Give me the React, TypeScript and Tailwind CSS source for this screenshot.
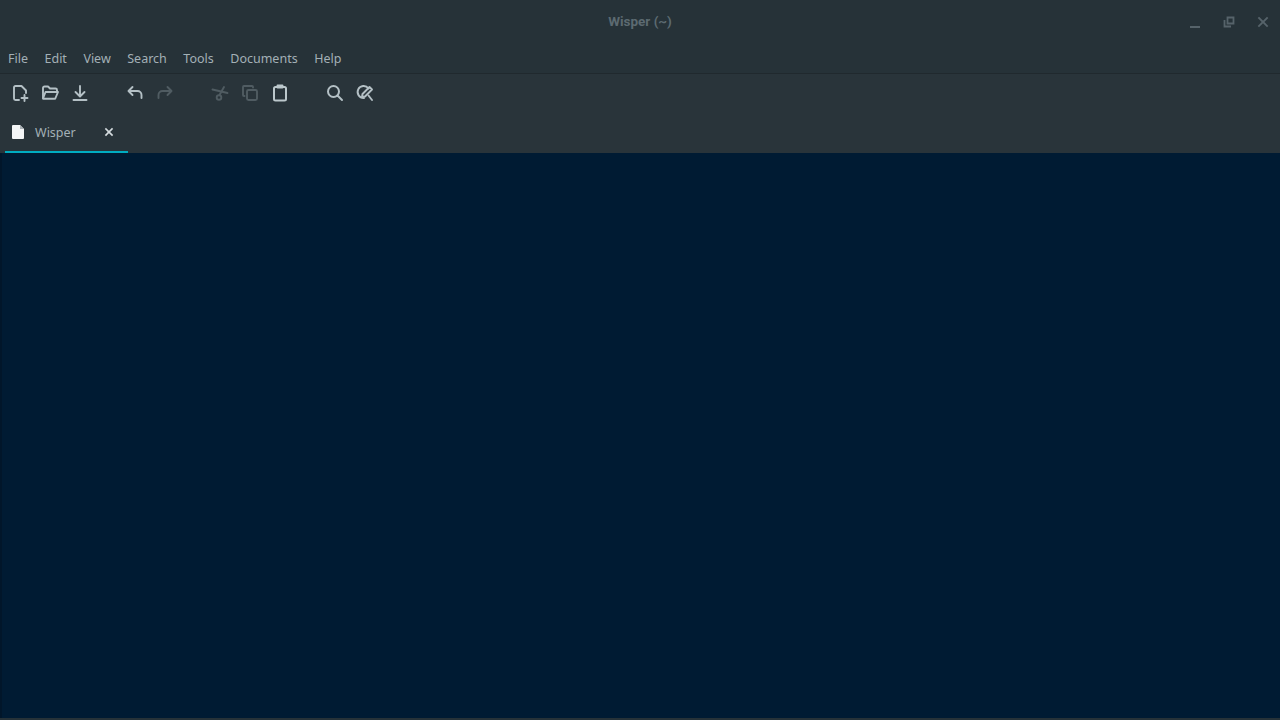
import { X } from "lucide-react";

const menus = ["File", "Edit", "View", "Search", "Tools", "Documents", "Help"];

function Icon({ children, off, x }: { children: React.ReactNode; off?: boolean; x?: string }) {
  return (
    <svg
      viewBox="0 0 20 20"
      fill="none"
      stroke="currentColor"
      strokeWidth="1.9"
      strokeLinecap="round"
      strokeLinejoin="round"
      className={`w-5 h-5 ${off ? "text-[#505c62]" : "text-[#b4c0c5]"} ${x ?? ""}`}
    >
      {children}
    </svg>
  );
}

export default function App() {
  return (
    <div className="w-[1280px] h-[720px] overflow-hidden flex flex-col bg-[#263238] font-['Noto_Sans',sans-serif]">
      {/* Title bar */}
      <div className="relative h-[42px] shrink-0 flex items-center justify-center">
        <span className="text-[13.5px] font-bold text-[#5c6a71] font-['Roboto',sans-serif] mt-[1px]">Wisper (~)</span>
        <div className="absolute right-0 top-0 h-[42px] flex items-center text-[#56636a]">
          <svg viewBox="0 0 12 12" className="w-3 h-3 mr-[22px] mt-[6px]"><rect x="1" y="8" width="10" height="2" fill="currentColor" /></svg>
          <svg viewBox="0 0 12 12" className="w-3 h-3 mr-[20px] mt-[2px]" fill="none" stroke="currentColor" strokeWidth="1.8"><path d="M4.500 1.500h6v6h-6z" /><path d="M1.500 4v6.500h6.500" /></svg>
          <X className="w-[16px] h-[16px] mr-[9px] mt-[1px]" strokeWidth={2.8} strokeLinecap="square" />
        </div>
      </div>

      {/* Menu bar */}
      <div className="h-[32px] shrink-0 flex items-center pl-2 pt-[3px] gap-[16.5px] border-b border-[#20292e] text-[12.5px] text-[#a3b0b6]">
        {menus.map((m) => (
          <span key={m}>{m}</span>
        ))}
      </div>

      {/* Toolbar */}
      <div className="h-[39px] shrink-0 flex items-center bg-[#29343a] pl-[10px] pb-[2px]">
        <Icon x="mr-[10px]">
          <path d="M9 17H5.500A1.500 1.500 0 0 1 4 15.500V4.500A1.500 1.500 0 0 1 5.500 3H11.500L16 7.500V10" />
          <path d="M14.500 12v6M11.500 15h6" />
        </Icon>
        <Icon x="mr-[10px]">
          <path d="M3 15V5a1.500 1.500 0 0 1 1.500-1.500H8L10 5.500H15.500A1.500 1.500 0 0 1 17 7v1" />
          <path d="M3 15.500 5.500 9H18l-2.500 6a1 1 0 0 1-1 .8H4a1 1 0 0 1-1-.3Z" />
        </Icon>
        <Icon x="mr-[35px]">
          <path d="M10 3v10M5.500 9l4.500 4.500L14.500 9M3.500 17h13" />
        </Icon>
        <Icon x="mr-[10px]">
          <path d="M7.500 4 3.500 8l4 4" />
          <path d="M4 8h8.500a4 4 0 0 1 4 4v3" />
        </Icon>
        <Icon off x="mr-[35px]">
          <path d="M12.500 4l4 4-4 4" />
          <path d="M16 8H7.500a4 4 0 0 0-4 4v3" />
        </Icon>
        <Icon off x="mr-[10px]">
          <circle cx="9" cy="14.500" r="2.300" />
          <path d="M2.500 6.500 17.500 10M9.500 12l4.500-8" />
        </Icon>
        <Icon off x="mr-[10px]">
          <rect x="7" y="7" width="10" height="10" rx="1.500" />
          <path d="M13 4.500V4a1 1 0 0 0-1-1H4a1 1 0 0 0-1 1v8a1 1 0 0 0 1 1h.500" />
        </Icon>
        <Icon x="mr-[35px] text-[#bcc8cc]">
          <rect x="4" y="4" width="12" height="13.500" rx="1.500" strokeWidth="2" />
          <rect x="7.500" y="2.500" width="5" height="2" fill="currentColor" />
        </Icon>
        <Icon x="mr-[10px]">
          <circle cx="8.500" cy="8.500" r="5.500" strokeWidth="2" />
          <path d="m12.500 12.500 4.500 4.500" strokeWidth="2" />
        </Icon>
        <Icon>
          <path d="M9 15A6 6 0 1 1 13.500 5.500" />
          <path d="m7 14 .5-3L14.500 4 17 6.500l-7 7Z" />
          <path d="m13.500 12.500 3.500 4.500" />
        </Icon>
      </div>

      {/* Tabs */}
      <div className="h-[40px] shrink-0 flex bg-[#29343a] pl-[5px]">
        <div className="w-[123px] flex items-center border-b-2 border-[#00acc1] text-[12.5px] text-[#a3b0b6]">
          <svg viewBox="0 0 14 16" className="w-[14px] h-4 ml-[6px] mr-[10px]">
            <path d="M2 1h7l4 4v9a1 1 0 0 1-1 1H2a1 1 0 0 1-1-1V2a1 1 0 0 1 1-1Z" fill="#f3f5f6" />
            <path d="M9 1v4h4Z" fill="#a9b1b5" />
          </svg>
          <span className="w-[41px] mt-[2px]">Wisper</span>
          <X className="w-3 h-3 ml-[27px] text-[#d5dcdf]" strokeWidth={3.4} strokeLinecap="square" />
        </div>
      </div>

      {/* Editor */}
      <div className="flex-1 bg-[#001b33] border-l-2 border-[#01162a]" />
      <div className="h-[2px] shrink-0 bg-[#263238]" />
    </div>
  );
}
